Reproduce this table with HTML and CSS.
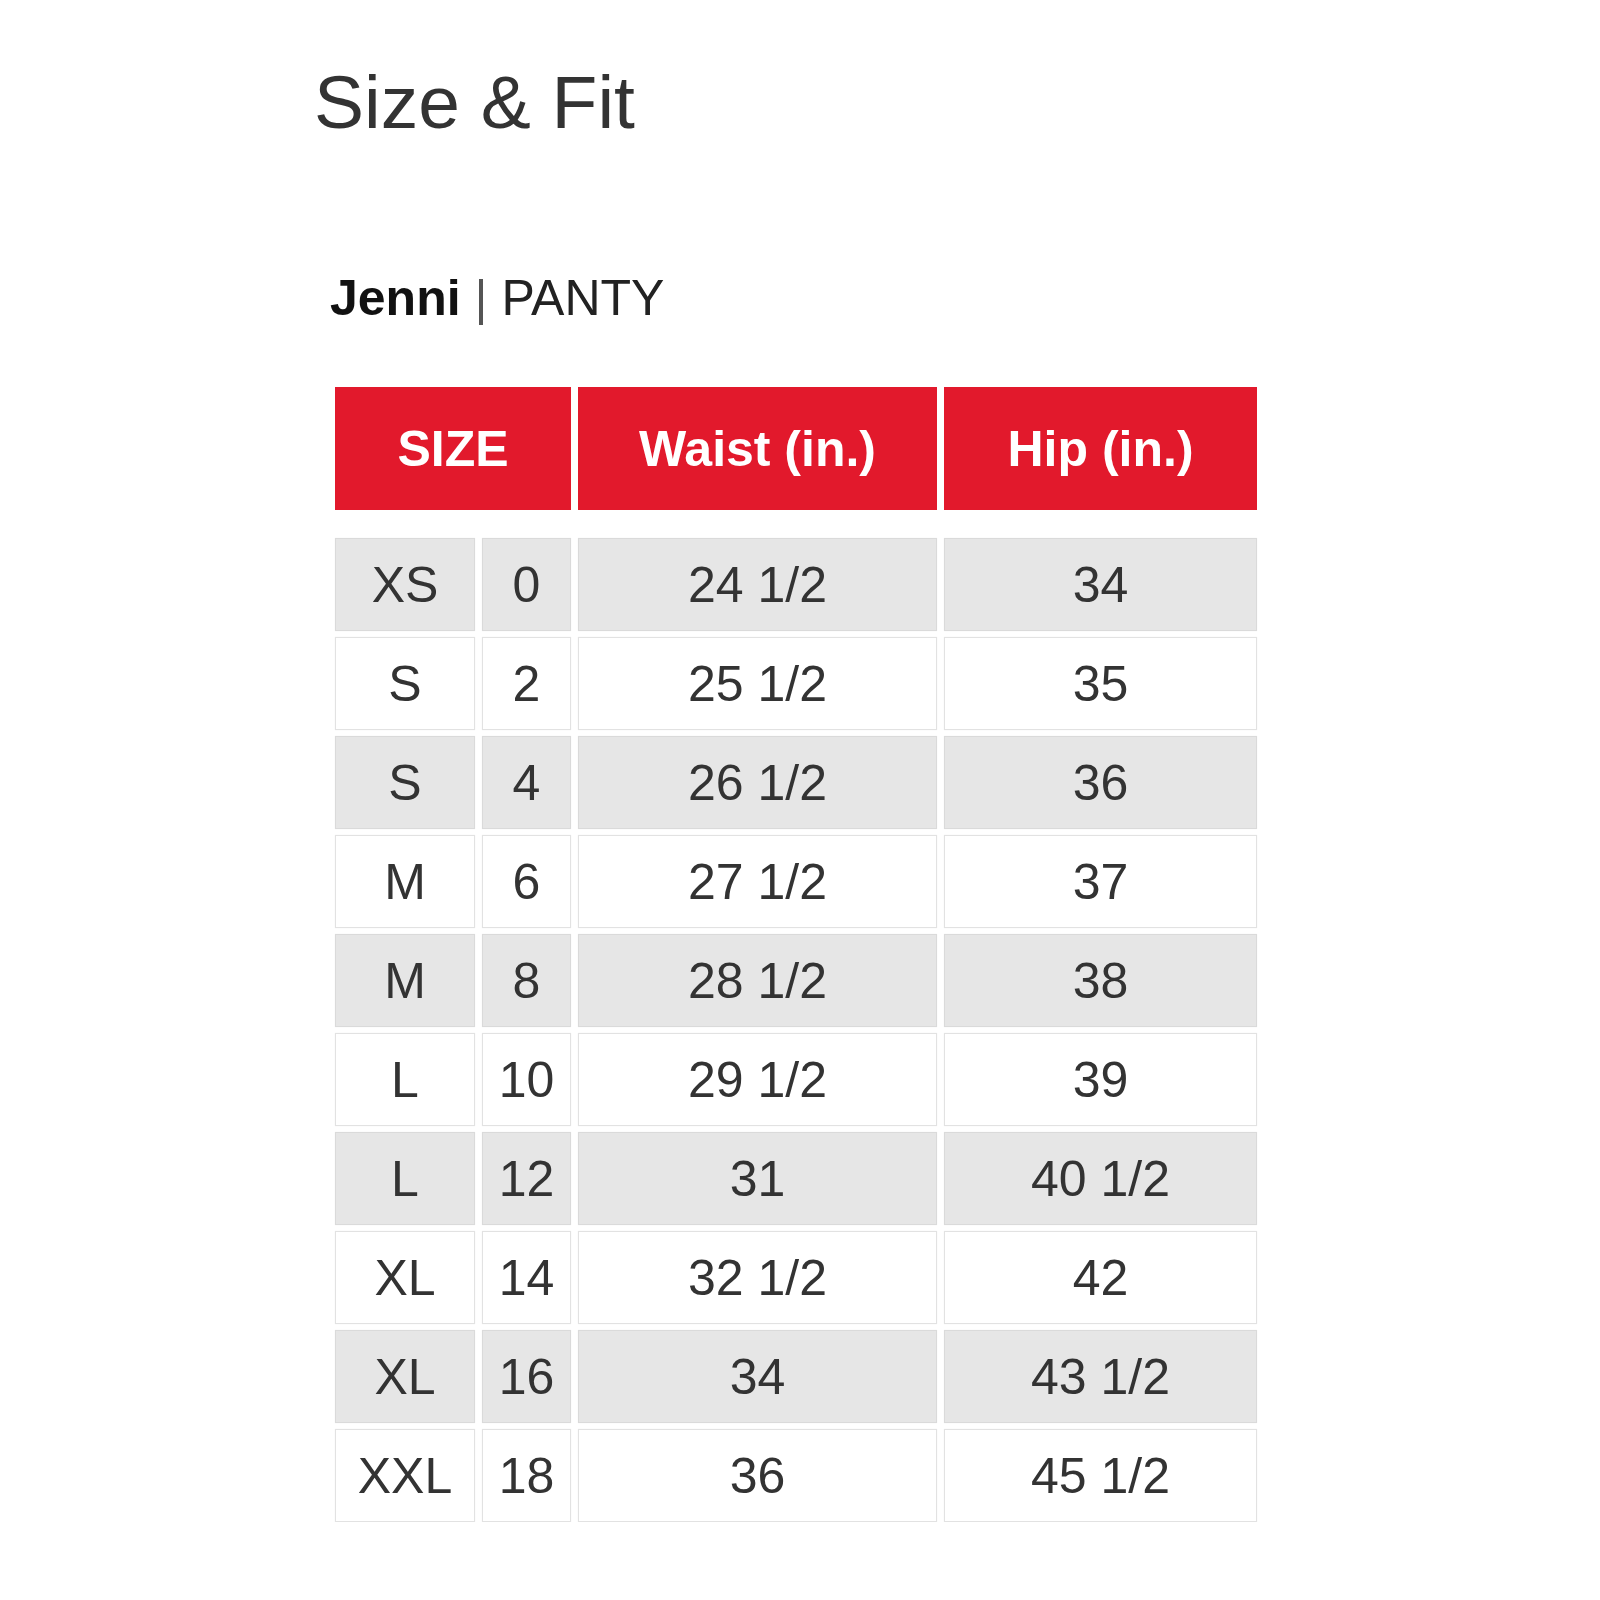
FILE: index.html
```html
<!DOCTYPE html>
<html lang="en">
<head>
<meta charset="utf-8">
<title>Size &amp; Fit</title>
<link rel="stylesheet" href="styles.css">
</head>
<body>
<main class="page">
  <h1 class="title">Size &amp; Fit</h1>
  <h2 class="product"><span class="brand">Jenni</span> <span class="sep">|</span> PANTY</h2>
  <div class="chart">
    <div class="head span2">SIZE</div>
    <div class="head">Waist (in.)</div>
    <div class="head">Hip (in.)</div>

    <div class="cell alt">XS</div><div class="cell alt">0</div><div class="cell alt">24 1/2</div><div class="cell alt">34</div>
    <div class="cell">S</div><div class="cell">2</div><div class="cell">25 1/2</div><div class="cell">35</div>
    <div class="cell alt">S</div><div class="cell alt">4</div><div class="cell alt">26 1/2</div><div class="cell alt">36</div>
    <div class="cell">M</div><div class="cell">6</div><div class="cell">27 1/2</div><div class="cell">37</div>
    <div class="cell alt">M</div><div class="cell alt">8</div><div class="cell alt">28 1/2</div><div class="cell alt">38</div>
    <div class="cell">L</div><div class="cell">10</div><div class="cell">29 1/2</div><div class="cell">39</div>
    <div class="cell alt">L</div><div class="cell alt">12</div><div class="cell alt">31</div><div class="cell alt">40 1/2</div>
    <div class="cell">XL</div><div class="cell">14</div><div class="cell">32 1/2</div><div class="cell">42</div>
    <div class="cell alt">XL</div><div class="cell alt">16</div><div class="cell alt">34</div><div class="cell alt">43 1/2</div>
    <div class="cell">XXL</div><div class="cell">18</div><div class="cell">36</div><div class="cell">45 1/2</div>
  </div>
</main>
</body>
</html>
```

FILE: styles.css
```css
html, body {
  margin: 0;
  padding: 0;
  background: #ffffff;
}

body {
  font-family: "Liberation Sans", Arial, sans-serif;
  color: #333333;
}

.page {
  padding: 65px 0 0 0;
}

.title {
  margin: 0 0 0 314px;
  font-size: 75px;
  line-height: 75px;
  font-weight: 400;
  color: #333333;
}

.product {
  margin: 133px 0 0 330px;
  font-size: 50px;
  line-height: 50px;
  font-weight: 400;
  color: #222222;
}

.brand {
  font-weight: 700;
  color: #111111;
}

.sep {
  color: #555555;
}

.chart {
  margin: 64px 0 0 335px;
  display: grid;
  grid-template-columns: 140px 89px 359px 313px;
  grid-template-rows: auto;
  grid-auto-rows: 93px;
  column-gap: 7px;
  row-gap: 6px;
  width: max-content;
}

.head {
  height: 123px;
  margin-bottom: 22px;
  background: #e2192c;
  color: #ffffff;
  font-weight: 700;
  font-size: 50px;
  display: flex;
  align-items: center;
  justify-content: center;
}

.span2 {
  grid-column: span 2;
}

.cell {
  box-sizing: border-box;
  border: 1px solid #e2e2e2;
  background: #ffffff;
  color: #333333;
  font-size: 50px;
  display: flex;
  align-items: center;
  justify-content: center;
  box-shadow: 0 0 1px rgba(0, 0, 0, 0.08);
}

.cell.alt {
  background: #e6e6e6;
  border-color: #dadada;
}
```
